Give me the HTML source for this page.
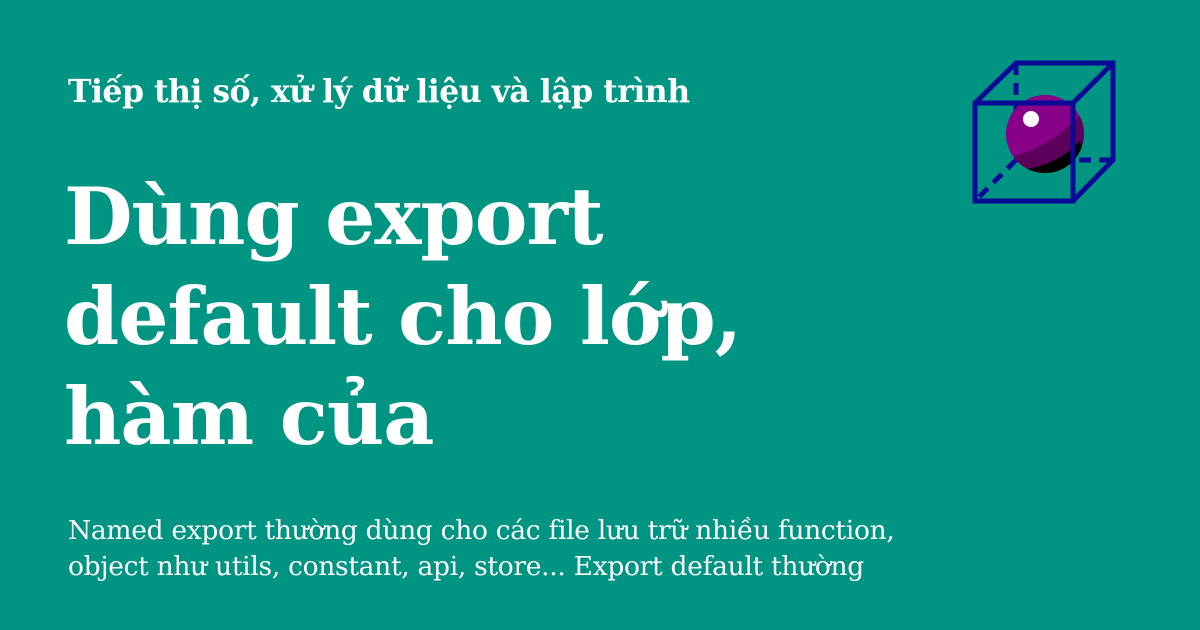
<!DOCTYPE html>
<html><head><meta charset="utf-8"><style>
html,body{margin:0;padding:0}
body{width:1200px;height:630px;background:#009483;position:relative;overflow:hidden;color:#fff;font-family:"DejaVu Serif","Liberation Serif",serif}
.t{position:absolute;left:68px;top:73px;font-size:31.5px;font-weight:bold;white-space:nowrap;letter-spacing:-0.5px}
.h{position:absolute;left:64px;top:167px;font-size:79px;font-weight:bold;line-height:100px;letter-spacing:-1px;width:800px}
.p{position:absolute;left:68px;top:513px;font-size:26.5px;line-height:36px;width:1000px;letter-spacing:-0.3px}
</style></head><body>
<div class="t">Tiếp thị số, xử lý dữ liệu và lập trình</div>
<div class="h">Dùng export<br>default cho lớp,<br>hàm của</div>
<div class="p">Named export thường dùng cho các file lưu trữ nhiều function,<br>object như utils, constant, api, store... Export default thường</div>
<svg style="position:absolute;left:0;top:0" width="1200" height="630">
<defs><clipPath id="c"><circle cx="1045" cy="134" r="39"/></clipPath></defs>
<g stroke="#0a0a96" stroke-width="5" fill="none">
<path d="M1016 63 V160 H1113 M1016 160 L975 201" stroke-dasharray="12 8"/>
</g>
<circle cx="1045" cy="134" r="39" fill="#880088"/>
<path d="M1000 160 Q1050 150 1085 110 L1090 180 L1000 180Z" fill="#5c005c" clip-path="url(#c)"/>
<path d="M1020 170 Q1060 165 1080 140 L1090 180 L1020 180Z" fill="#000" clip-path="url(#c)"/>
<circle cx="1031" cy="119" r="8" fill="#fff"/>
<g stroke="#0a0a96" stroke-width="5" fill="none">
<rect x="975" y="103" width="98" height="98"/>
<path d="M975 103 L1016 63 H1113 V160 L1073 201 M1073 103 L1113 63"/>
</g>
</svg>
</body></html>
